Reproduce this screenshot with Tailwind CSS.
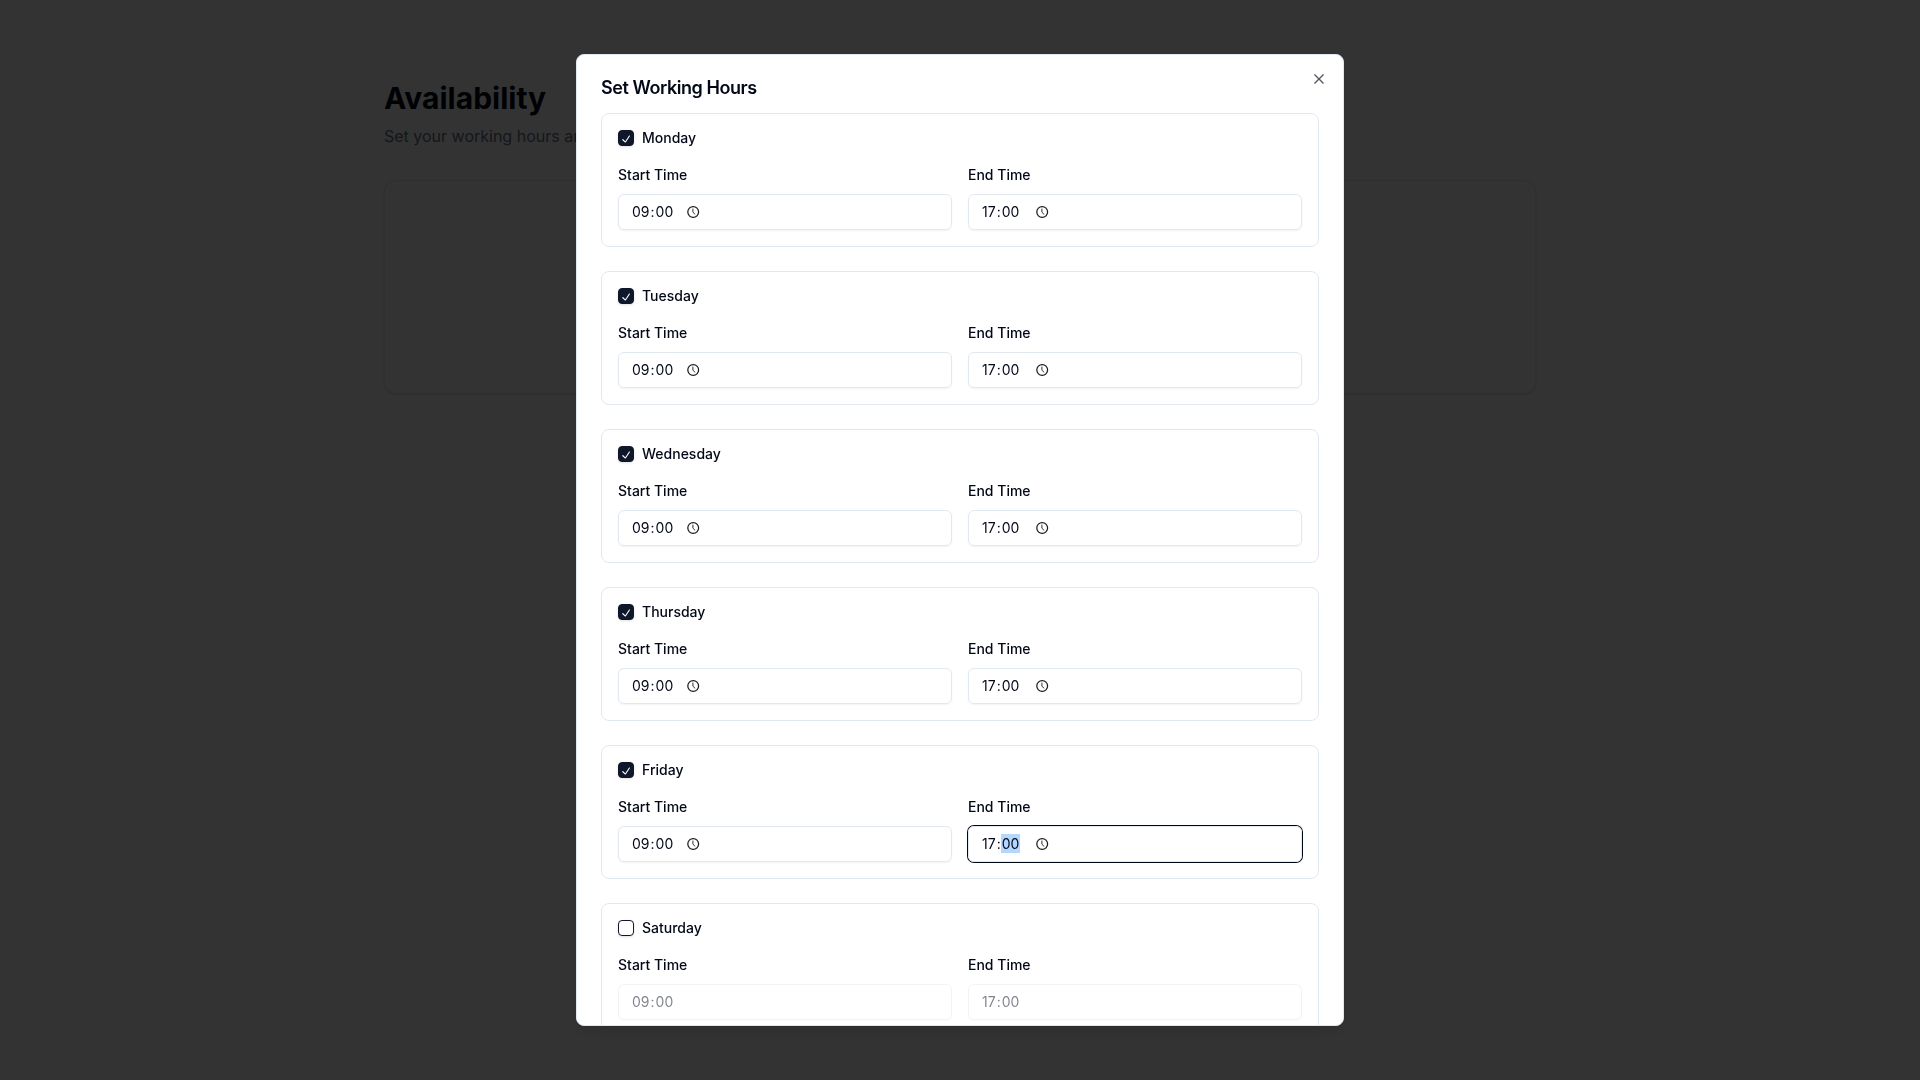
<!DOCTYPE html>
<html lang="en">
<head>
<meta charset="utf-8">
<title>Availability</title>
<script src="https://cdn.jsdelivr.net/npm/@tailwindcss/browser@4"></script>
</head>
<body class="h-screen overflow-hidden bg-white font-['Inter',sans-serif] text-[#020817] antialiased">
<main class="mx-auto w-[1152px] pt-20">
  <h1 class="text-3xl leading-9 font-bold">Availability</h1>
  <p class="mt-2 w-48 overflow-hidden text-base whitespace-nowrap text-[#64748b]">Set your working hours an</p>
  <div class="mt-8 h-[214px] rounded-xl border border-[#e2e8f0] bg-white shadow-sm"></div>
</main>
<div class="fixed inset-0 flex items-center justify-center bg-black/80">
  <div role="dialog" class="relative flex h-[972px] w-3xl flex-col gap-4 overflow-hidden rounded-lg border border-[#e2e8f0] bg-white p-6 pb-0 shadow-lg">
    <h2 class="shrink-0 text-lg leading-none font-semibold tracking-tight">Set Working Hours</h2>
    <div id="days" class="flex flex-col gap-6"></div>
    <button aria-label="Close" class="absolute top-4 right-4 opacity-70">
      <svg class="size-4" viewBox="0 0 15 15" fill="currentColor" stroke="currentColor" stroke-width="0.2"><path fill-rule="evenodd" clip-rule="evenodd" d="M11.7816 4.03157C12.0062 3.80702 12.0062 3.44295 11.7816 3.2184C11.5571 2.99385 11.193 2.99385 10.9685 3.2184L7.50005 6.68682L4.03164 3.2184C3.80708 2.99385 3.44301 2.99385 3.21846 3.2184C2.99391 3.44295 2.99391 3.80702 3.21846 4.03157L6.68688 7.49999L3.21846 10.9684C2.99391 11.193 2.99391 11.5571 3.21846 11.7816C3.44301 12.0062 3.80708 12.0062 4.03164 11.7816L7.50005 8.31316L10.9685 11.7816C11.193 12.0062 11.5571 12.0062 11.7816 11.7816C12.0062 11.5571 12.0062 11.193 11.7816 10.9684L8.31322 7.49999L11.7816 4.03157Z"/></svg>
    </button>
  </div>
</div>
<script>
const days = [['Monday', true], ['Tuesday', true], ['Wednesday', true], ['Thursday', true], ['Friday', true], ['Saturday', false]];
const check = `<svg class="size-3.5 shrink-0" viewBox="0 0 15 15" fill="currentColor"><path fill-rule="evenodd" clip-rule="evenodd" d="M11.4669 3.72684C11.7558 3.91574 11.8369 4.30308 11.648 4.59198L7.39799 11.092C7.29783 11.2452 7.13556 11.3467 6.95402 11.3699C6.77247 11.3931 6.58989 11.3355 6.45446 11.2124L3.70446 8.71241C3.44905 8.48022 3.43023 8.08494 3.66242 7.82953C3.89461 7.57412 4.28989 7.55529 4.5453 7.78749L6.75292 9.79441L10.6018 3.90792C10.7907 3.61902 11.178 3.53795 11.4669 3.72684Z"/></svg>`;
const clock = `<svg class="size-3.5" viewBox="0 0 14 14" fill="none" stroke="#1c1c1c" stroke-width="1.25"><circle cx="7.2" cy="7" r="5.4"/><path d="M6.9 3.6V7.2L9.2 9.4" stroke-width="0.9"/></svg>`;
function field(label, h, m, gap, enabled, focused) {
  const box = focused ? 'border-[#e2e8f0] ring-1 ring-[#020817]' : enabled ? 'border-[#e2e8f0] shadow-xs' : 'border-[#e2e8f0] opacity-50 shadow-xs';
  return `<div class="flex flex-col gap-2">
    <span class="h-6 pt-px text-sm leading-6 font-medium">${label}</span>
    <div class="flex h-9 items-center rounded-md border px-3 text-sm ${box}">
      <div class="flex pb-px"><span class="px-px leading-[19px]">${h}</span><span class="leading-[19px]">:</span><span class="px-px leading-[19px] ${focused ? 'bg-[#b3d7ff]' : ''}">${m}</span></div>
      ${enabled ? `<span class="${gap}">${clock}</span>` : ''}
    </div>
  </div>`;
}
document.getElementById('days').innerHTML = days.map(([d, on]) => `
  <section class="flex shrink-0 flex-col gap-4 rounded-lg border border-[#e2e8f0] p-4">
    <div class="flex h-4 items-center gap-2">
      <span class="flex size-4 items-center justify-center rounded-sm border border-[#0f172a] pt-px text-[#f8fafc] shadow-sm ${on ? 'bg-[#0f172a]' : ''}">${on ? check : ''}</span>
      <span class="text-sm leading-none font-medium">${d}</span>
    </div>
    <div class="grid grid-cols-2 gap-4">
      ${field('Start Time', '09', '00', 'ml-3', on, false)}
      ${field('End Time', '17', '00', 'ml-[15px]', on, d === 'Friday')}
    </div>
  </section>`).join('');
</script>
</body>
</html>
